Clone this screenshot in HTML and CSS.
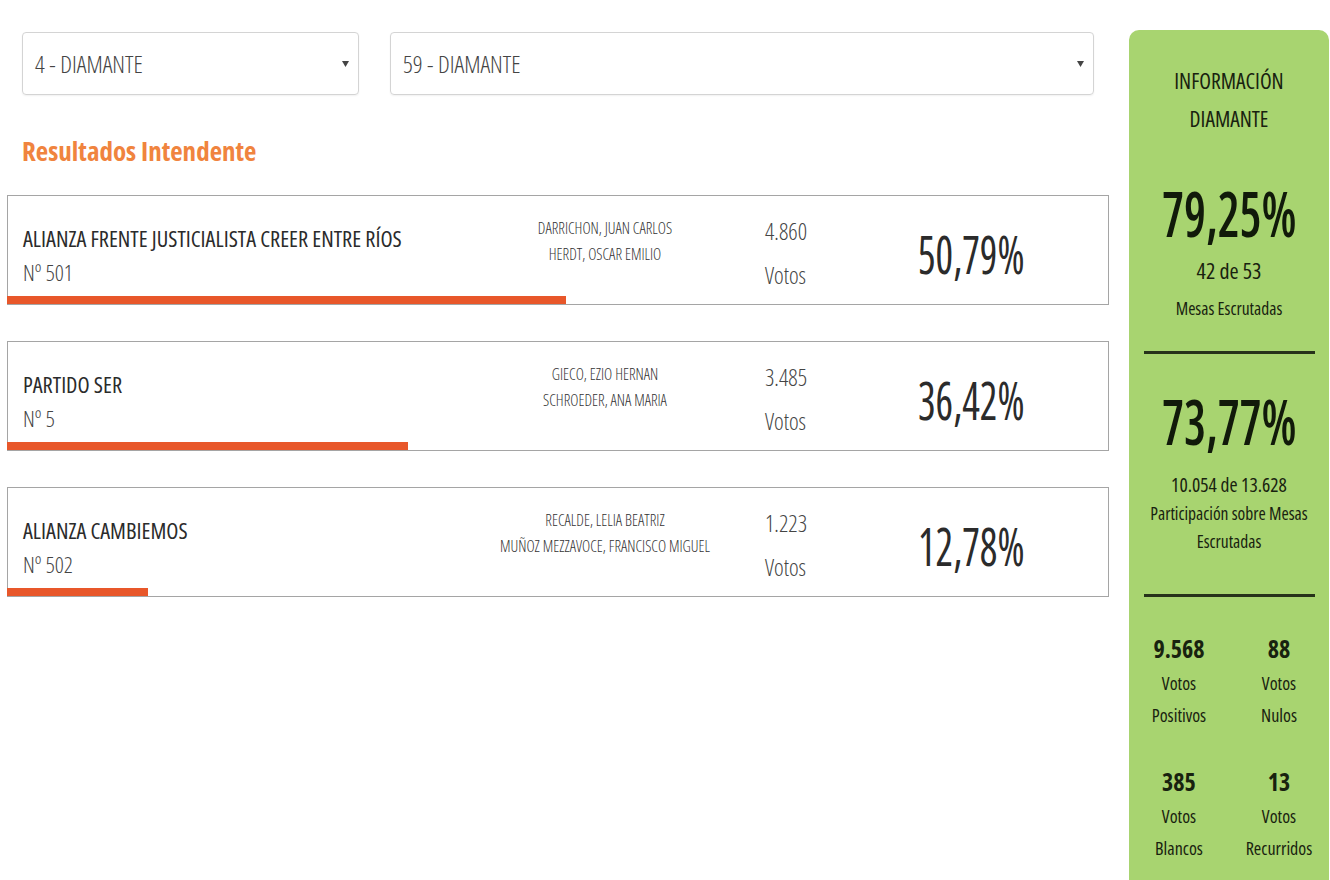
FILE: index.html
```html
<!DOCTYPE html>
<html lang="es">

<head>
    <meta charset="utf-8">
    <title>Resultados Intendente - Diamante</title>
    <link rel="stylesheet" href="styles.css">
</head>

<body>
    <div class="page">
        <div class="main">
            <!-- selectores de seccion / circuito -->
            <div class="filters">
                <div class="select select-small">
                    <span>4 - DIAMANTE</span>
                    <svg class="caret" width="7" height="7" viewBox="0 0 7 7"><path d="M0 1h7L3.5 7z" fill="#444"/></svg>
                </div>
                <div class="select select-wide">
                    <span>59 - DIAMANTE</span>
                    <svg class="caret" width="7" height="7" viewBox="0 0 7 7"><path d="M0 1h7L3.5 7z" fill="#444"/></svg>
                </div>
            </div>

            <h2 class="title">Resultados Intendente</h2>

            <div class="results">
                <div class="party">
                    <div class="party-name">
                        <div class="name">ALIANZA FRENTE JUSTICIALISTA CREER ENTRE RÍOS</div>
                        <div class="number">Nº 501</div>
                    </div>
                    <div class="candidates">
                        <div>DARRICHON, JUAN CARLOS</div>
                        <div>HERDT, OSCAR EMILIO</div>
                    </div>
                    <div class="votes">
                        <div>4.860</div>
                        <div>Votos</div>
                    </div>
                    <div class="percent"><span>50,79%</span></div>
                    <div class="bar" style="width: 50.79%"></div>
                </div>

                <div class="party">
                    <div class="party-name">
                        <div class="name">PARTIDO SER</div>
                        <div class="number">Nº 5</div>
                    </div>
                    <div class="candidates">
                        <div>GIECO, EZIO HERNAN</div>
                        <div>SCHROEDER, ANA MARIA</div>
                    </div>
                    <div class="votes">
                        <div>3.485</div>
                        <div>Votos</div>
                    </div>
                    <div class="percent"><span>36,42%</span></div>
                    <div class="bar" style="width: 36.42%"></div>
                </div>

                <div class="party">
                    <div class="party-name">
                        <div class="name">ALIANZA CAMBIEMOS</div>
                        <div class="number">Nº 502</div>
                    </div>
                    <div class="candidates">
                        <div>RECALDE, LELIA BEATRIZ</div>
                        <div>MUÑOZ MEZZAVOCE, FRANCISCO MIGUEL</div>
                    </div>
                    <div class="votes">
                        <div>1.223</div>
                        <div>Votos</div>
                    </div>
                    <div class="percent"><span>12,78%</span></div>
                    <div class="bar" style="width: 12.78%"></div>
                </div>
            </div>
        </div>

        <!-- panel lateral -->
        <div class="info">
            <div class="info-title">INFORMACIÓN<br>DIAMANTE</div>

            <div class="big first"><span>79,25%</span></div>
            <div class="sub first">42 de 53</div>
            <div class="label first">Mesas Escrutadas</div>

            <div class="divider"></div>

            <div class="big"><span>73,77%</span></div>
            <div class="sub">10.054 de 13.628</div>
            <div class="label">Participación sobre Mesas<br>Escrutadas</div>

            <div class="divider second"></div>

            <div class="stats">
                <div class="stat">
                    <div class="stat-num">9.568</div>
                    <div>Votos</div>
                    <div>Positivos</div>
                </div>
                <div class="stat">
                    <div class="stat-num">88</div>
                    <div>Votos</div>
                    <div>Nulos</div>
                </div>
                <div class="stat">
                    <div class="stat-num">385</div>
                    <div>Votos</div>
                    <div>Blancos</div>
                </div>
                <div class="stat">
                    <div class="stat-num">13</div>
                    <div>Votos</div>
                    <div>Recurridos</div>
                </div>
            </div>
        </div>
    </div>
</body>

</html>
```
FILE: styles.css
```css
body {
    margin: 0;
    background: #fff;
    font-family: "Open Sans", "Liberation Sans", sans-serif;
    font-stretch: 75%;
    color: #333;
}

.page {
    display: flex;
    align-items: flex-start;
    width: 1330px;
    height: 880px;
    overflow: hidden;
}

.main {
    width: 1102px;
    margin-left: 7px;
    padding-top: 32px;
}

/* selects */
.filters {
    display: flex;
    gap: 31px;
    margin-left: 15px;
}

.select {
    height: 61px;
    border: 1px solid #d4d4d4;
    border-radius: 4px;
    box-shadow: 0 1px 2px rgba(0, 0, 0, .06);
    display: flex;
    align-items: center;
    justify-content: space-between;
    padding: 0 9px 0 12px;
    font-size: 24px;
    font-weight: 300;
    color: #444;
}

.select-small {
    width: 314px;
}

.select-wide {
    width: 681px;
}

.title {
    margin: 38px 0 0 15px;
    font-size: 27px;
    line-height: 36px;
    font-weight: 700;
    color: #f0843e;
}

/* resultados */
.results {
    margin-top: 26px;
    display: flex;
    flex-direction: column;
    gap: 36px;
}

.party {
    position: relative;
    height: 108px;
    border: 1px solid #a5a5a5;
    display: flex;
    align-items: flex-start;
}

.party-name {
    width: 457px;
    padding: 26px 0 0 15px;
    font-size: 22.3px;
    line-height: 34px;
    color: #2b2b2b;
}

.party-name .number {
    font-weight: 300;
    color: #444;
}

.candidates {
    width: 250px;
    padding-top: 19px;
    text-align: center;
    font-size: 15.5px;
    font-weight: 300;
    line-height: 26px;
    color: #333;
}

.votes {
    width: 153px;
    margin-left: 35px;
    padding-top: 13px;
    font-size: 23px;
    font-weight: 300;
    line-height: 44px;
    color: #444;
}

.percent {
    padding-top: 28px;
    font-size: 53px;
    line-height: 60px;
    font-weight: 400;
    color: #2b2b2b;
}

.percent span {
    display: inline-block;
    transform: scaleX(.78);
    transform-origin: left;
}

.bar {
    position: absolute;
    left: -1px;
    bottom: 0;
    height: 8px;
    background: #e8572a;
}

/* panel derecho */
.info {
    width: 200px;
    min-height: 850px;
    margin: 30px 0 0 20px;
    background: #a8d470;
    border-radius: 10px 10px 0 0;
    text-align: center;
    color: #18220f;
}

.info-title {
    padding-top: 32px;
    font-size: 21.5px;
    font-weight: 400;
    line-height: 38px;
}

.big {
    margin-top: 31px;
    font-size: 63px;
    line-height: 72px;
    font-weight: 600;
    color: #111a0a;
}

.big span {
    display: inline-block;
    transform: scaleX(.78);
}

.big.first {
    margin-top: 39px;
}

.sub {
    margin-top: 14px;
    font-size: 19.5px;
    line-height: 28px;
}

.sub.first {
    margin-top: 7px;
    font-size: 22px;
}

.label {
    font-size: 17.5px;
    line-height: 28px;
}

.label.first {
    margin-top: 10px;
}

.divider {
    height: 3px;
    margin: 29px 14px 0 15px;
    background: #26321a;
}

.divider.second {
    margin-top: 39px;
}

.stats {
    display: grid;
    grid-template-columns: 100px 100px;
    row-gap: 33px;
    padding-top: 34px;
    font-size: 18px;
    line-height: 32px;
}

.stat-num {
    font-size: 24px;
    line-height: 36px;
    font-weight: 700;
}
```
